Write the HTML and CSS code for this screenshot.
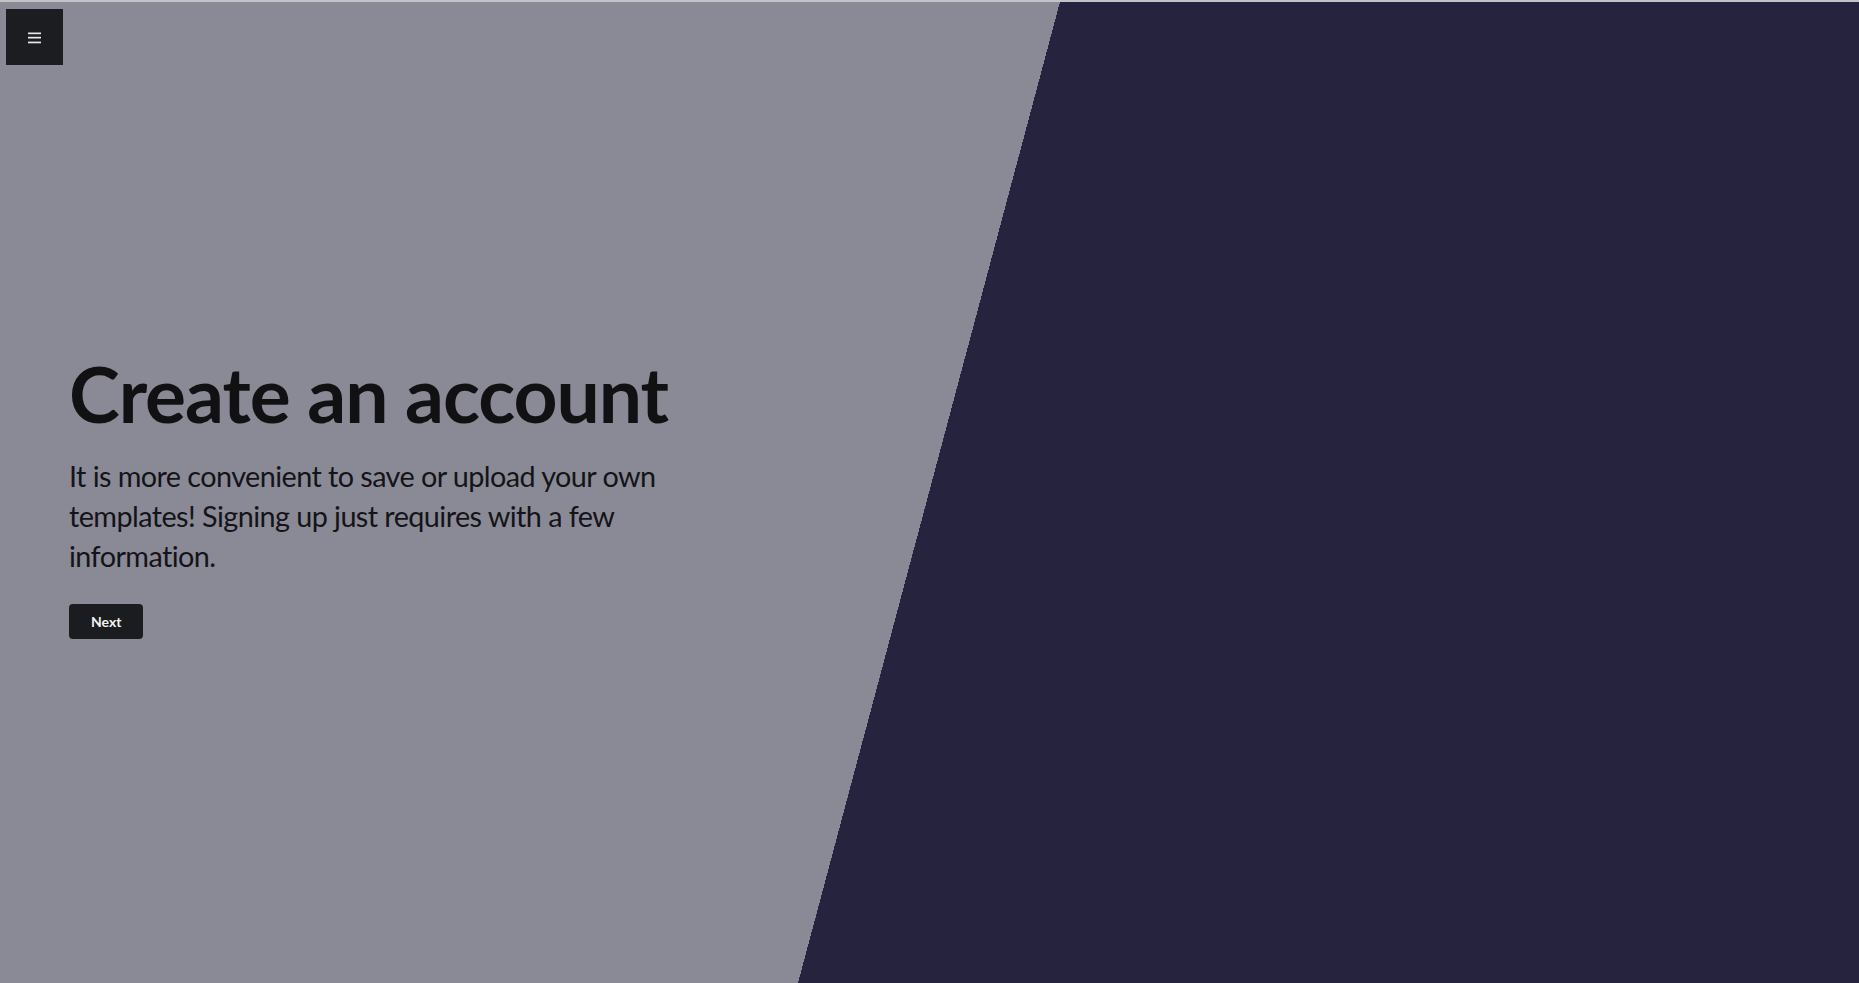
FILE: index.html
```html
<!DOCTYPE html>
<html lang="en">
<head>
<meta charset="utf-8">
<title>Create an account</title>
<link rel="stylesheet" href="styles.css">
</head>
<body>
<div class="page">
  <button class="menu-btn" aria-label="Menu">
    <svg width="13" height="12" viewBox="0 0 13 12"><rect x="0" y="0.5" width="13" height="1.7" fill="#e8e8ea"/><rect x="0" y="4.8" width="13" height="1.7" fill="#e8e8ea"/><rect x="0" y="9.6" width="13" height="1.7" fill="#e8e8ea"/></svg>
  </button>
  <main class="intro">
    <h1 class="title">Create an account</h1>
    <p class="lead">It is more convenient to save or upload your own templates! Signing up just requires with a few information.</p>
    <button class="next-btn">Next</button>
  </main>
</div>
</body>
</html>
```
FILE: styles.css
```css
html, body {
  margin: 0;
  padding: 0;
}
body {
  font-family: Lato, "Open Sans", Arial, sans-serif;
  color: #111114;
  font-variant-ligatures: no-common-ligatures;
}
.page {
  box-sizing: border-box;
  height: 100vh;
  border-top: 2px solid #c2c2c7;
  background: linear-gradient(104.95deg, #8a8a96 calc(50% - 0.5px), #25233d calc(50% - 0.5px));
  display: flex;
  flex-direction: column;
  justify-content: center;
  padding-left: 69px;
}
.menu-btn {
  position: fixed;
  top: 9px;
  left: 6px;
  width: 57px;
  height: 56px;
  border: none;
  padding: 0;
  margin: 0;
  background: #1c1d20;
  display: flex;
  align-items: center;
  justify-content: center;
  cursor: pointer;
}
.menu-btn svg {
  display: block;
  margin-top: 2px;
}
.intro {
  max-width: 640px;
  padding-top: 1px;
}
.title {
  margin: 0 0 16px 0;
  font-size: 76.8px;
  line-height: 1.2;
  font-weight: 700;
  letter-spacing: -1.05px;
  color: #111114;
}
.lead {
  margin: 0 0 27px 0;
  font-size: 28.8px;
  line-height: 1.4;
  font-weight: 400;
  letter-spacing: -0.57px;
  color: #141418;
}
.next-btn {
  height: 35px;
  padding: 0 22px;
  border: none;
  border-radius: 4px;
  background: #1b1c1f;
  color: #f2f2f4;
  font-family: Lato, "Open Sans", Arial, sans-serif;
  font-weight: 700;
  font-size: 14px;
  cursor: pointer;
}
```
